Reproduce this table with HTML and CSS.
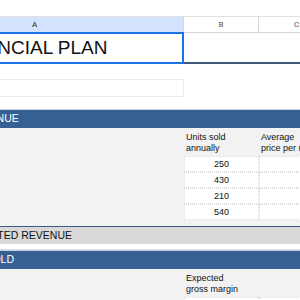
FILE: index.html
```html
<!DOCTYPE html>
<html lang="en">
<head>
  <meta charset="UTF-8">
  <title>Financial Plan</title>
  <link rel="stylesheet" href="styles.css">
</head>
<body>
  <div class="sheet">
    <div class="toolbar"></div>

    <div class="row colhead">
      <div class="hd selected">A</div>
      <div class="hd">B</div>
      <div class="hd">C</div>
    </div>

    <div class="row title-row">
      <div class="cell active"><span class="title">FINANCIAL PLAN</span></div>
      <div class="cell"></div>
      <div class="cell"></div>
    </div>

    <div class="row spacer-15"></div>

    <div class="row input-row">
      <div class="cell field"></div>
      <div class="cell"></div>
      <div class="cell"></div>
    </div>

    <div class="row spacer-12"></div>

    <div class="row band blue"><div class="band-text rev">REVENUE</div></div>

    <div class="row labels">
      <div class="cell"></div>
      <div class="cell lbl">Units sold<br>annually</div>
      <div class="cell lbl">Average<br>price per unit</div>
    </div>

    <div class="row value-row">
      <div class="cell"></div>
      <div class="cell val">250</div>
      <div class="cell val"></div>
    </div>
    <div class="row value-row">
      <div class="cell"></div>
      <div class="cell val">430</div>
      <div class="cell val"></div>
    </div>
    <div class="row value-row">
      <div class="cell"></div>
      <div class="cell val">210</div>
      <div class="cell val"></div>
    </div>
    <div class="row value-row">
      <div class="cell"></div>
      <div class="cell val">540</div>
      <div class="cell val"></div>
    </div>

    <div class="row gray-gap"></div>

    <div class="row band total"><div class="band-text est">ESTIMATED REVENUE</div></div>

    <div class="row spacer-5"></div>

    <div class="row band blue"><div class="band-text cogs">COST OF GOODS SOLD</div></div>

    <div class="row labels">
      <div class="cell"></div>
      <div class="cell lbl">Expected<br>gross margin</div>
      <div class="cell lbl"></div>
    </div>

    <div class="row value-row">
      <div class="cell"></div>
      <div class="cell val"></div>
      <div class="cell val"></div>
    </div>
  </div>
</body>
</html>
```

FILE: styles.css
```css
body {
  margin: 0;
  font-family: "Liberation Sans", Arial, sans-serif;
  background: #fff;
}
.sheet {
  width: 300px;
  height: 300px;
  overflow: hidden;
}
.toolbar {
  height: 16px;
}
.row {
  display: grid;
  grid-template-columns: 298px 75px 76px;
  margin-left: -114px;
  width: 449px;
}

.colhead {
  height: 16px;
  box-sizing: border-box;
  border-top: 1px solid #e1e1e1;
}
.hd {
  font-family: Roboto, "Liberation Sans", sans-serif;
  font-size: 8px;
  color: #555;
  text-align: center;
  line-height: 15px;
  border-right: 1px solid #d6d6d6;
  border-bottom: 1px solid #d6d6d6;
}
.hd.selected {
  background: #d3e3fd;
  color: #222;
  border-bottom-color: #9fbff0;
}

.title-row {
  height: 32px;
}
.title-row .cell {
  border-bottom: 2px solid #3d5878;
}
.cell.active {
  border: 2px solid #1a73e8;
  border-bottom-color: #1a73e8;
  display: flex;
  align-items: center;
  padding-left: 66px;
}
.title {
  font-size: 19px;
  color: #111;
  white-space: nowrap;
}

.spacer-15 { height: 15px; }
.spacer-12 { height: 12px; }
.spacer-5 {
  height: 5px;
  border-bottom: 1px solid #d8dde4;
}

.input-row {
  height: 18px;
}
.field {
  border: 1px dotted #d4d4d4;
}

.band {
  display: block;
  height: 18px;
  font-size: 10.5px;
  line-height: 17px;
  white-space: nowrap;
}
.band.blue {
  background: #366092;
  color: #fff;
  border-top: 1px solid #c9d3df;
}
.band.total {
  background: #d9d9d9;
  color: #111;
  height: 17px;
  border-top: 1px solid #3d5a80;
}
.band-text.rev { padding-left: 82px; }
.band-text.est { padding-left: 73px; }
.band-text.cogs { padding-left: 8px; }

.labels {
  height: 28px;
  background: #f2f2f2;
}
.lbl {
  font-size: 9px;
  line-height: 11px;
  color: #111;
  padding: 4px 0 0 2px;
  white-space: nowrap;
  overflow: hidden;
}

.value-row {
  height: 16px;
  background: #f2f2f2;
}
.val {
  background: #fff;
  border: 1px dotted #dcdcdc;
  font-size: 9px;
  line-height: 14px;
  text-align: center;
  color: #111;
}

.gray-gap {
  height: 6px;
  background: #f2f2f2;
}
```
